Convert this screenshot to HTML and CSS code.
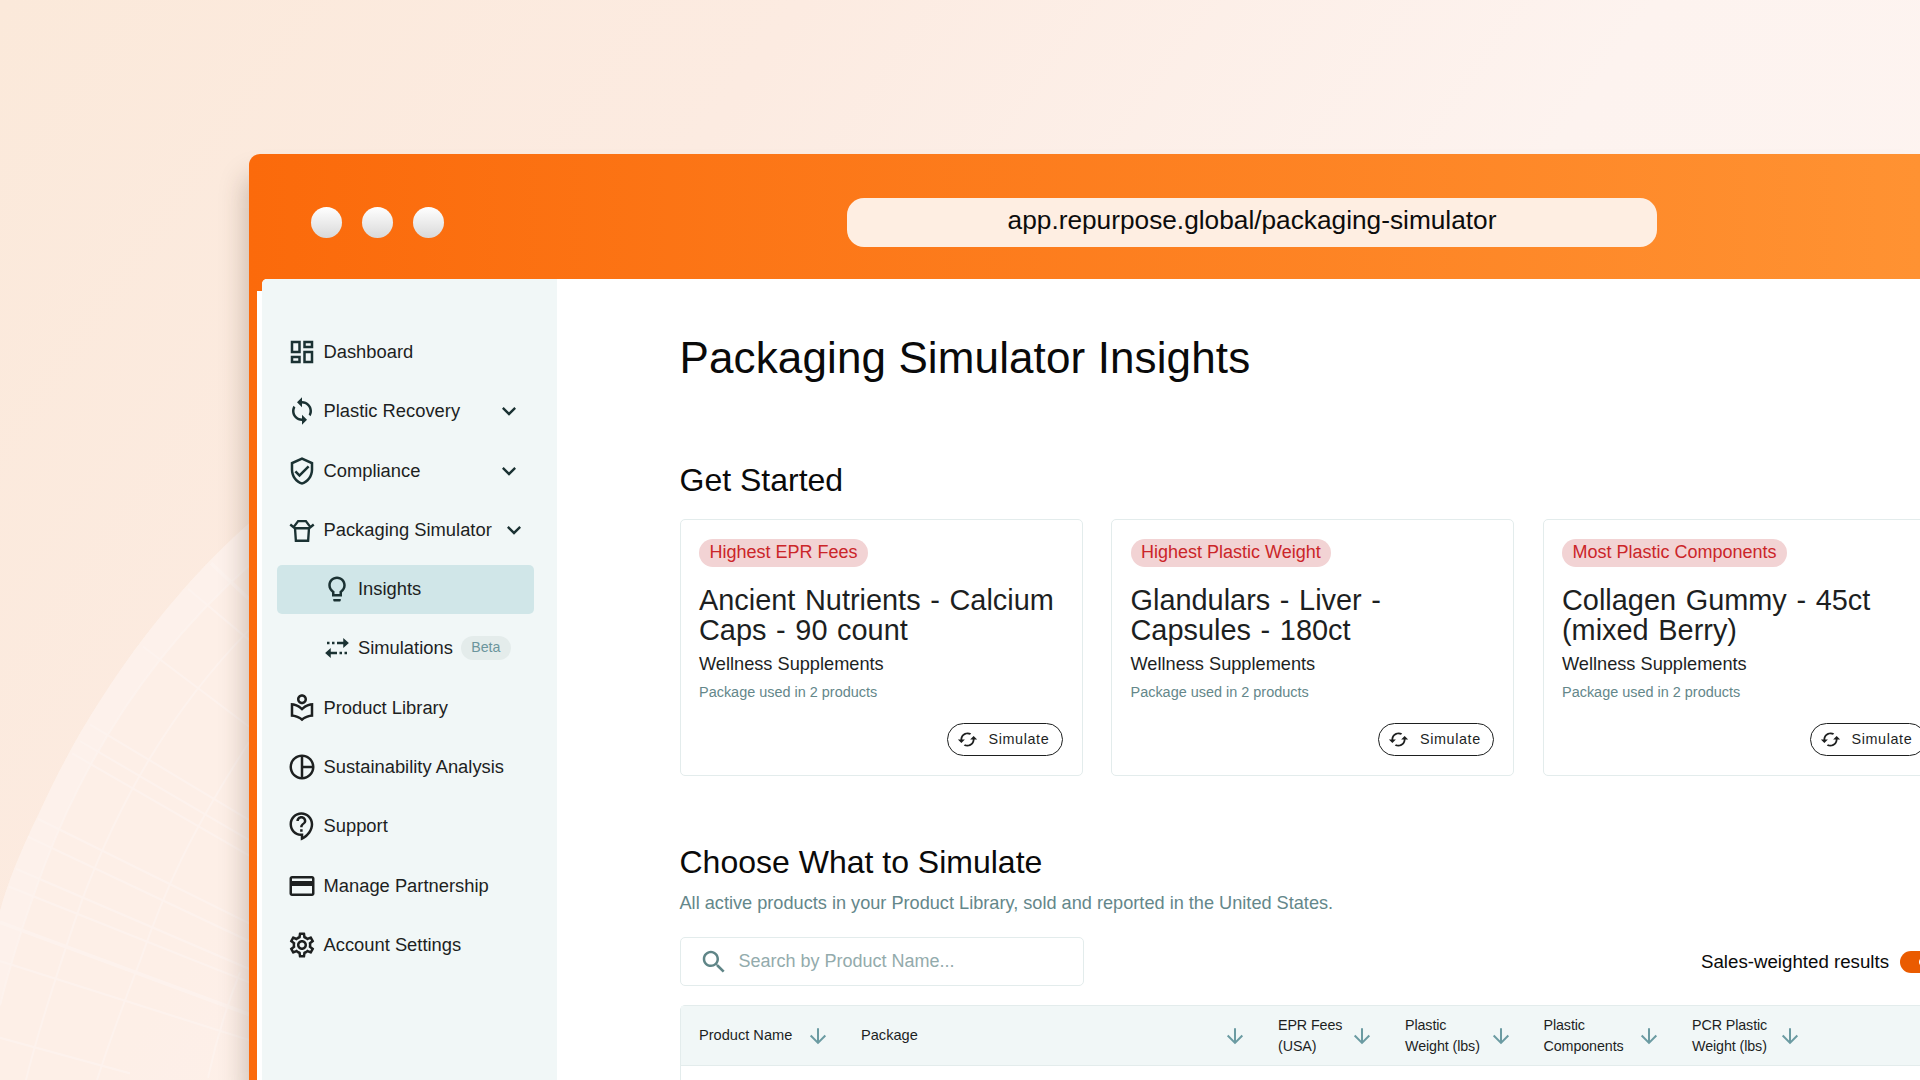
FILE: index.html
```
<!DOCTYPE html>
<html lang="en">
<head>
<meta charset="UTF-8" />
<meta name="viewport" content="width=device-width, initial-scale=1" />
<title>Packaging Simulator Insights</title>
<link rel="stylesheet" href="styles.css">
</head>
<body>

<!-- Icons used more than once -->
<svg class="sprite">
  <symbol id="i-chevron" viewBox="0 0 24 24"><path d="M7.41 8.59 12 13.17l4.59-4.58L18 10l-6 6-6-6z"/></symbol>
  <symbol id="i-arrow" viewBox="0 0 24 24"><path d="M12 3.500v16M4 11.500l8 8 8-8" fill="none" stroke="currentColor" stroke-width="2.200"/></symbol>
  <symbol id="i-sync" viewBox="0 0 24 24"><path d="M12 4V1L8 5l4 4V6c3.31 0 6 2.69 6 6 0 1.01-.25 1.97-.7 2.8l1.46 1.46C19.54 15.03 20 13.57 20 12c0-4.42-3.58-8-8-8zm0 14c-3.31 0-6-2.69-6-6 0-1.01.25-1.97.7-2.8L5.24 7.74C4.46 8.97 4 10.43 4 12c0 4.42 3.58 8 8 8v3l4-4-4-4z"/></symbol>
  <symbol id="i-cached" viewBox="0 0 24 24"><path d="m19 8-4 4h3c0 3.31-2.69 6-6 6-1.01 0-1.97-.25-2.8-.7l-1.46 1.46C8.97 19.54 10.43 20 12 20c4.42 0 8-3.58 8-8h3zM6 12c0-3.31 2.69-6 6-6 1.01 0 1.97.25 2.8.7l1.46-1.46C15.03 4.46 13.57 4 12 4c-4.42 0-8 3.58-8 8H1l4 4 4-4z"/></symbol>
</svg>

<!-- Globe in the background -->
<svg class="globe" viewBox="0 0 270 522" preserveAspectRatio="none">
  <path class="disc" d="M270 6 249 21C160 92 85 190 40 280Q10 335 0 370V522H270z"/>
  <path class="band" d="M249 21C160 92 85 190 40 280Q10 335 0 370V452Q20 385 44 330C90 220 160 130 249 59z"/>
  <g class="lines">
    <path d="M249 59C160 130 90 220 44 330Q15 400 0 455"/>
    <path d="M249 117C170 190 120 270 82 360Q40 470 26 522"/>
    <path d="M249 218C190 300 165 350 140 415Q112 480 97 522"/>
    <path d="M240 425Q220 470 208 520"/>
    <path d="M188 80 249 126M143 132 249 204M90 202 249 288M80 217 249 306M72 228 249 320"/>
    <path d="M38 287 249 381M28 303 249 397M16 332 249 422M9 348 249 434M0 415 249 486M0 484 130 516"/>
    <path class="thick" d="M211 57 249 89M0 380 249 463"/>
  </g>
</svg>

<div class="window">
  <div class="titlebar">
    <div class="dots"><span></span><span></span><span></span></div>
    <div class="url">app.repurpose.global/packaging-simulator</div>
  </div>

  <div class="app">
    <nav class="sidebar">
      <a class="item">
        <svg class="icon" viewBox="0 0 24 24"><path d="M19 5v2h-4V5h4M9 5v6H5V5h4m10 8v6h-4v-6h4M9 17v2H5v-2h4M21 3h-8v6h8V3zM11 3H3v10h8V3zm10 8h-8v10h8V11zm-10 4H3v6h8v-6z"/></svg>
        Dashboard
      </a>
      <a class="item">
        <svg class="icon"><use href="#i-sync"/></svg>
        Plastic Recovery
        <svg class="chevron"><use href="#i-chevron"/></svg>
      </a>
      <a class="item">
        <svg class="icon" viewBox="0 0 24 24"><path d="M12 1 3 5v6c0 5.55 3.84 10.74 9 12 5.16-1.26 9-6.45 9-12V5l-9-4zm7 10c0 4.52-2.98 8.69-7 9.93-4.02-1.24-7-5.41-7-9.93V6.3l7-3.11 7 3.11V11zM7.41 11.59 6 13l4 4 8-8-1.41-1.42L10 14.17z"/></svg>
        Compliance
        <svg class="chevron"><use href="#i-chevron"/></svg>
      </a>
      <a class="item wide">
        <svg class="icon" viewBox="0 0 24 24"><path d="M2.600 7.600 6.300 10.600H17.700L21.400 7.600M5.600 9.300 8.900 4.900H15.100L18.400 9.300M6.400 10.600 7.100 20.600H16.900L17.600 10.600" fill="none" stroke="currentColor" stroke-width="1.900"/></svg>
        Packaging Simulator
        <svg class="chevron"><use href="#i-chevron"/></svg>
      </a>
      <a class="item sub active">
        <svg class="icon" viewBox="0 0 24 24"><path d="M9 21c0 .55.45 1 1 1h4c.55 0 1-.45 1-1v-1H9v1zm3-19C8.14 2 5 5.14 5 9c0 2.38 1.19 4.47 3 5.74V18h8v-3.26c1.81-1.27 3-3.36 3-5.74 0-3.86-3.14-7-7-7zm2.85 11.1-.85.6V16h-4v-2.3l-.85-.6C7.8 12.16 7 10.63 7 9c0-2.76 2.24-5 5-5s5 2.24 5 5c0 1.63-.8 3.16-2.15 4.1z"/></svg>
        Insights
      </a>
      <a class="item sub">
        <svg class="icon" viewBox="0 0 24 24"><path d="M4 7h2v2H4zM8 7h2v2H8zM12 7h5V4l4.500 4-4.500 4V9h-5zM18 15h2v2h-2zM14 15h2v2h-2zM12 15H7v-3l-4.500 4 4.500 4v-3h5z"/></svg>
        Simulations
        <span class="beta">Beta</span>
      </a>
      <a class="item dark">
        <svg class="icon" viewBox="0 0 24 24"><path d="M16 5c0-2.210-1.790-4-4-4S8 2.790 8 5s1.790 4 4 4 4-1.790 4-4zm-4 2c-1.100 0-2-.9-2-2s.9-2 2-2 2 .9 2 2-.9 2-2 2zM3 8v11c3.480 0 6.640 1.350 9 3.540 2.360-2.190 5.520-3.540 9-3.540V8c-3.480 0-6.640 1.350-9 3.550C9.640 9.350 6.480 8 3 8zm16 9.130c-2.530.34-4.930 1.300-7 2.820-2.060-1.520-4.470-2.490-7-2.830v-6.950c2.100.38 4.050 1.350 5.640 2.830L12 14.280l1.360-1.270c1.590-1.480 3.540-2.450 5.640-2.830v6.950z"/></svg>
        Product Library
      </a>
      <a class="item dark">
        <svg class="icon" viewBox="0 0 24 24"><path d="M12 2C6.480 2 2 6.480 2 12s4.480 10 10 10 10-4.480 10-10S17.520 2 12 2zm1 2.070c3.610.45 6.480 3.330 6.930 6.930H13V4.070zM4 12c0-4.060 3.070-7.440 7-7.930v15.870c-3.930-.5-7-3.880-7-7.940zm9 7.930V13h6.930c-.45 3.610-3.320 6.480-6.930 6.930z"/></svg>
        Sustainability Analysis
      </a>
      <a class="item dark">
        <svg class="icon" viewBox="0 0 24 24"><path d="M11 23.590v-3.600c-5.010-.26-9-4.420-9-9.490C2 5.260 6.260 1 11.500 1S21 5.260 21 10.500c0 4.950-3.440 9.930-8.570 12.400L11 23.590zM11.500 3C7.360 3 4 6.360 4 10.500S7.360 18 11.500 18H13v2.300c3.640-2.300 6-6.080 6-9.800C19 6.360 15.640 3 11.500 3zm-1 11.500h2v2h-2v-2zm2-1.500h-2c0-3.250 3-3 3-5 0-1.100-.9-2-2-2s-2 .9-2 2h-2c0-2.210 1.790-4 4-4s4 1.790 4 4c0 2.500-3 2.750-3 5z"/></svg>
        Support
      </a>
      <a class="item dark">
        <svg class="icon" viewBox="0 0 24 24"><path d="M20 4H4c-1.110 0-1.990.89-1.990 2L2 18c0 1.110.89 2 2 2h16c1.110 0 2-.89 2-2V6c0-1.110-.89-2-2-2zm0 14H4v-6h16v6zm0-10H4V6h16v2z"/></svg>
        Manage Partnership
      </a>
      <a class="item dark">
        <svg class="icon" viewBox="0 0 24 24"><path d="M19.430 12.980c.04-.32.07-.64.07-.98s-.03-.66-.07-.98l2.110-1.650c.19-.15.24-.42.12-.64l-2-3.460c-.09-.16-.26-.25-.44-.25-.06 0-.12.01-.17.03l-2.490 1c-.52-.4-1.080-.73-1.690-.98l-.38-2.650C14.460 2.180 14.250 2 14 2h-4c-.25 0-.46.18-.49.42l-.38 2.650c-.61.25-1.170.59-1.690.98l-2.490-1c-.06-.02-.12-.03-.18-.03-.17 0-.34.09-.43.25l-2 3.460c-.13.22-.07.49.12.64l2.110 1.650c-.04.32-.07.65-.07.98s.03.66.07.98l-2.110 1.650c-.19.15-.24.42-.12.64l2 3.460c.09.16.26.25.44.25.06 0 .12-.01.17-.03l2.490-1c.52.4 1.080.73 1.690.98l.38 2.650c.03.24.24.42.49.42h4c.25 0 .46-.18.49-.42l.38-2.650c.61-.25 1.170-.59 1.690-.98l2.490 1c.06.02.12.03.18.03.17 0 .34-.09.43-.25l2-3.460c.12-.22.07-.49-.12-.64l-2.110-1.650zm-1.980-1.710c.04.31.05.52.05.73 0 .21-.02.43-.05.73l-.14 1.130.89.7 1.080.84-.7 1.210-1.270-.51-1.040-.42-.9.68c-.43.32-.84.56-1.250.73l-1.060.43-.16 1.130-.2 1.350h-1.400l-.19-1.350-.16-1.130-1.060-.43c-.43-.18-.83-.41-1.230-.71l-.91-.7-1.060.43-1.270.51-.7-1.210 1.080-.84.89-.7-.14-1.130c-.03-.31-.05-.54-.05-.74s.02-.43.05-.73l.14-1.130-.89-.7-1.080-.84.7-1.210 1.270.51 1.040.42.9-.68c.43-.32.84-.56 1.250-.73l1.060-.43.16-1.130.2-1.350h1.390l.19 1.350.16 1.130 1.060.43c.43.18.83.41 1.230.71l.91.7 1.060-.43 1.270-.51.7 1.210-1.070.85-.89.7.14 1.130zM12 8c-2.210 0-4 1.790-4 4s1.790 4 4 4 4-1.790 4-4-1.790-4-4-4zm0 6c-1.100 0-2-.9-2-2s.9-2 2-2 2 .9 2 2-.9 2-2 2z"/></svg>
        Account Settings
      </a>
    </nav>

    <main class="content">
      <h1>Packaging Simulator Insights</h1>

      <h2>Get Started</h2>
      <div class="cards">
        <div class="card">
          <span class="tag">Highest EPR Fees</span>
          <h3>Ancient Nutrients - Calcium Caps - 90 count</h3>
          <p class="category">Wellness Supplements</p>
          <p class="used">Package used in 2 products</p>
          <button><svg><use href="#i-cached"/></svg>Simulate</button>
        </div>
        <div class="card">
          <span class="tag">Highest Plastic Weight</span>
          <h3>Glandulars - Liver - Capsules - 180ct</h3>
          <p class="category">Wellness Supplements</p>
          <p class="used">Package used in 2 products</p>
          <button><svg><use href="#i-cached"/></svg>Simulate</button>
        </div>
        <div class="card">
          <span class="tag">Most Plastic Components</span>
          <h3>Collagen Gummy - 45ct (mixed Berry)</h3>
          <p class="category">Wellness Supplements</p>
          <p class="used">Package used in 2 products</p>
          <button><svg><use href="#i-cached"/></svg>Simulate</button>
        </div>
      </div>

      <h2>Choose What to Simulate</h2>
      <p class="intro">All active products in your Product Library, sold and reported in the United States.</p>

      <div class="toolbar">
        <div class="search">
          <svg viewBox="0 0 24 24"><path d="M15.500 14h-.79l-.28-.27C15.410 12.590 16 11.110 16 9.500 16 5.910 13.090 3 9.500 3S3 5.910 3 9.500 5.910 16 9.500 16c1.610 0 3.090-.59 4.230-1.570l.27.28v.79l5 4.990L20.490 19l-4.990-5zm-6 0C7.010 14 5 11.990 5 9.500S7.010 5 9.500 5 14 7.010 14 9.500 11.990 14 9.500 14z"/></svg>
          Search by Product Name...
        </div>
        <div class="weighted">Sales-weighted results <span class="toggle"></span></div>
      </div>

      <div class="table">
        <div class="thead">
          <div class="th">Product Name <svg><use href="#i-arrow"/></svg></div>
          <div class="th">Package <svg><use href="#i-arrow"/></svg></div>
          <div class="th"><span>EPR Fees<br>(USA)</span> <svg><use href="#i-arrow"/></svg></div>
          <div class="th"><span>Plastic<br>Weight (lbs)</span> <svg><use href="#i-arrow"/></svg></div>
          <div class="th"><span>Plastic<br>Components</span> <svg><use href="#i-arrow"/></svg></div>
          <div class="th"><span>PCR Plastic<br>Weight (lbs)</span> <svg><use href="#i-arrow"/></svg></div>
        </div>
      </div>
    </main>
  </div>
</div>

</body>
</html>
```
FILE: styles.css
```
* {
  box-sizing: border-box;
}
body {
  margin: 0;
  width: 1920px;
  height: 1080px;
  overflow: hidden;
  position: relative;
  padding: 154px 0 0 249px;
  font-family: "Liberation Sans", Arial, sans-serif;
  color: #1d1f1f;
  background: linear-gradient(125deg, #fbe9da 0%, #fcebe1 30%, #fdf3ef 62%, #fef5f2 100%);
}
svg {
  fill: currentColor;
  flex: none;
}
h1, h2, h3, p {
  margin: 0;
  font-weight: normal;
}
.sprite {
  position: absolute;
  width: 0;
  height: 0;
}

/* Background globe */
.globe {
  position: absolute;
  left: 0;
  top: 500px;
  width: 270px;
  height: 580px;
}
.globe .disc {
  fill: #fdf1e9;
  opacity: 0.7;
}
.globe .band {
  fill: #fdf3ef;
  opacity: 0.45;
}
.globe .lines {
  fill: none;
  stroke: #fdf5f1;
  stroke-width: 2;
  opacity: 0.65;
}
.globe .thick {
  stroke-width: 3.5;
}

/* Browser window */
.window {
  position: relative;
  width: 1671px;
  height: 926px;
  overflow: hidden;
  background: linear-gradient(90deg, #fb6a0b, #ff9232);
  border-radius: 11px 0 0 0;
  box-shadow: -4px 22px 26px rgba(70, 50, 35, 0.26);
}
.titlebar {
  display: flex;
  align-items: center;
  height: 125px;
  padding: 12px 0 0 62px;
}
.dots {
  display: flex;
  gap: 20px;
  width: 536px;
}
.dots span {
  width: 31px;
  height: 31px;
  border-radius: 50%;
  background: linear-gradient(#fff, #d9d9d9);
}
.url {
  width: 810px;
  height: 49px;
  line-height: 44px;
  border-radius: 17px;
  background: #feeee2;
  text-align: center;
  font-size: 26.25px;
  color: #0c0c0c;
}
.app {
  display: flex;
  height: 801px;
  margin-left: 13px;
  background: #fff;
  border-radius: 5px 0 0 0;
}
/* white strip between the orange frame and the sidebar */
.app::before {
  content: "";
  position: absolute;
  left: 8px;
  top: 137px;
  width: 5px;
  bottom: 0;
  background: #fff;
}

/* Sidebar */
.sidebar {
  flex: none;
  width: 295px;
  padding: 48.5px 23px 0 15px;
  background: #f1f7f7;
  border-radius: 5px 0 0 0;
  display: flex;
  flex-direction: column;
  gap: 10.3px;
}
.item {
  display: flex;
  flex: none;
  align-items: center;
  height: 49px;
  padding: 0 11px 0 10px;
  font-size: 18.35px;
  border-radius: 5px;
}
.item .icon {
  width: 30px;
  height: 30px;
  margin-right: 6.5px;
  color: #1b3233;
}
.item.dark .icon {
  color: #1d2020;
}
.item.sub {
  padding-left: 44.5px;
}
.item.active {
  background: #d0e6e8;
}
.chevron {
  width: 28px;
  height: 28px;
  margin-left: auto;
  color: #1b3233;
}
.item.wide {
  padding-right: 6px;
}
.beta {
  width: 50px;
  height: 24px;
  line-height: 23px;
  margin-left: 8px;
  border-radius: 12px;
  background: #e4eceb;
  color: #6b959c;
  font-size: 14.2px;
  text-align: center;
}

/* Main content */
.content {
  flex: none;
  width: 1500px;
  padding-left: 122.5px;
}
h1 {
  margin-top: 54px;
  line-height: 50px;
  font-size: 44px;
  letter-spacing: 0.12px;
  color: #0a0a0a;
}
h2 {
  margin-top: 78px;
  line-height: 38px;
  font-size: 32px;
  color: #0a0a0a;
}
.cards {
  display: flex;
  gap: 28.5px;
  margin-top: 20px;
}
.card {
  display: flex;
  flex-direction: column;
  align-items: flex-start;
  width: 403px;
  height: 257px;
  padding: 19px 19px 19px 18.5px;
  border: 1.5px solid #e3ecec;
  border-radius: 5px;
}
.tag {
  height: 28px;
  line-height: 27px;
  padding: 0 10.5px;
  border-radius: 14px;
  background: #f2d3d4;
  color: #cb2529;
  font-size: 18px;
}
.card h3 {
  margin-top: 19px;
  line-height: 29.5px;
  font-size: 28.9px;
  word-spacing: 1.6px;
}
.category {
  margin-top: 9px;
  line-height: 20px;
  font-size: 18.2px;
}
.used {
  margin-top: 9px;
  line-height: 18px;
  font-size: 14.45px;
  color: #64878a;
}
.card button {
  display: flex;
  align-items: center;
  gap: 11px;
  width: 116px;
  height: 33px;
  margin: auto 0 0 auto;
  padding: 0 0 1px 9px;
  border: 1.5px solid #1d1f1f;
  border-radius: 17px;
  background: #fff;
  color: #1d1f1f;
  font: 14.4px "Liberation Sans", Arial, sans-serif;
  letter-spacing: 0.6px;
}
.card button svg {
  width: 21px;
  height: 21px;
}
.cards + h2 {
  margin-top: 67px;
}
.intro {
  margin-top: 11px;
  line-height: 22px;
  font-size: 18.16px;
  color: #64878a;
}
.toolbar {
  display: flex;
  align-items: center;
  height: 49px;
  margin-top: 23px;
}
.search {
  display: flex;
  align-items: center;
  gap: 9.5px;
  width: 404.5px;
  height: 49px;
  padding-left: 18.5px;
  border: 1.5px solid #e3ecec;
  border-radius: 5px;
  font-size: 18px;
  color: #93abac;
}
.search svg {
  width: 30px;
  height: 30px;
  color: #5f8587;
}
.weighted {
  display: flex;
  align-items: center;
  gap: 11px;
  margin-left: 617px;
  font-size: 18.7px;
  color: #0a0a0a;
}
.toggle {
  width: 42px;
  height: 22px;
  border-radius: 11px;
  background: radial-gradient(circle at 28px 11px, #fff 8.5px, #ea5b00 9px);
}

/* Products table */
.table {
  height: 200px;
  margin-top: 19px;
  border: 1.5px solid #e3ecec;
  border-radius: 5px;
}
.thead {
  display: grid;
  grid-template-columns: 162px 417px 127px 138.5px 148.5px 141px;
  height: 60px;
  padding-left: 18.5px;
  background: #f1f7f7;
  border-bottom: 1.5px solid #e3ecec;
}
.th {
  display: flex;
  align-items: center;
  justify-content: space-between;
  padding-right: 32px;
  font-size: 14.6px;
  line-height: 21px;
}
.th span {
  font-size: 14.3px;
  letter-spacing: -0.1px;
}
.th svg {
  width: 22px;
  height: 22px;
  color: #6b9ba2;
}
```
